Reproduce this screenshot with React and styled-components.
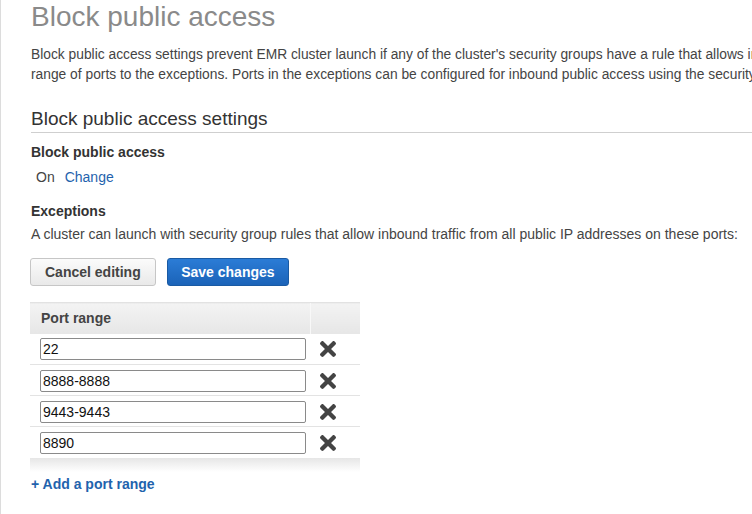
import React from "react";
import styled, { createGlobalStyle } from "styled-components";

const Global = createGlobalStyle`
  html, body { margin: 0; padding: 0; background: #fff; overflow: hidden; }
  body { font-family: Arial, "Liberation Sans", Helvetica, sans-serif; color: #444; }
`;

const Page = styled.div`
  border-left: 1px solid #dcdcdc;
  min-height: 514px;
  width: 1200px;
  padding-left: 30px;
  box-sizing: border-box;
`;

const Title = styled.h1`
  margin: 0;
  font-size: 28px;
  line-height: 34px;
  font-weight: normal;
  color: #8a8a8a;
`;

const Intro = styled.p`
  margin: 11px 0 0;
  font-size: 13.8px;
  line-height: 20px;
  color: #444;
  white-space: nowrap;
`;

const SectionHeading = styled.h2`
  margin: 22px 0 0;
  font-size: 19px;
  line-height: 24px;
  font-weight: normal;
  color: #333;
  padding-bottom: 1px;
  border-bottom: 1px solid #cfcfcf;
`;

const Label = styled.div`
  margin-top: ${(p) => p.$mt}px;
  font-size: 14px;
  line-height: 20px;
  font-weight: bold;
  color: #333;
`;

const StatusRow = styled.div`
  margin-top: 5px;
  padding-left: 5px;
  display: flex;
  gap: 10px;
  font-size: 14px;
  line-height: 20px;
  color: #444;
`;

const Link = styled.a`
  color: #1f63ad;
  text-decoration: none;
  cursor: pointer;
  font-weight: ${(p) => (p.$bold ? "bold" : "normal")};
  font-size: 14px;
`;

const Text = styled.div`
  margin-top: 3px;
  font-size: 14px;
  line-height: 20px;
  color: #444;
`;

const Buttons = styled.div`
  display: flex;
  gap: 11px;
  margin: 14px 0 0 -1px;
`;

const Button = styled.button`
  height: 28px;
  box-sizing: border-box;
  padding: 0 ${(p) => (p.$primary ? 13.5 : 14)}px;
  font-family: inherit;
  font-size: 14px;
  font-weight: bold;
  border-radius: 3px;
  cursor: pointer;
  color: ${(p) => (p.$primary ? "#fff" : "#444")};
  border: 1px solid ${(p) => (p.$primary ? "#1a5aa3" : "#c6c6c6")};
  background: ${(p) =>
    p.$primary
      ? "linear-gradient(#2b7cd6, #1b63b8)"
      : "linear-gradient(#fbfbfb, #e9e9e9)"};
`;

const Table = styled.table`
  margin: 16px 0 0 -1px;
  width: 330px;
  border-collapse: collapse;
  font-size: 14px;
`;

const HeadCell = styled.th`
  height: 31px;
  padding: 0 0 0 11px;
  text-align: left;
  font-size: 14px;
  font-weight: bold;
  color: #444;
  background: linear-gradient(#f3f3f3, #e6e6e6);
  border-top: 1px solid #e2e2e2;
  border-left: ${(p) => (p.$divider ? "1px solid #f8f8f8" : "none")};
  width: ${(p) => (p.$narrow ? "50px" : "auto")};
  box-sizing: border-box;
`;

const Row = styled.tr`
  height: 31px;
  border-bottom: ${(p) => (p.$last ? "none" : "1px solid #e3e3e3")};
`;

const InputCell = styled.td`
  padding: 0 4px 0 10px;
  vertical-align: middle;
`;

const IconCell = styled.td`
  padding: 0 0 0 10px;
  vertical-align: middle;
`;

const PortInput = styled.input`
  display: block;
  width: 100%;
  box-sizing: border-box;
  height: 22px;
  margin-top: 1px;
  padding: 0 2px;
  font-family: inherit;
  font-size: 14px;
  color: #111;
  border: 1px solid #8a8a8a;
  border-radius: 2px;
  outline: none;
`;

const RemoveButton = styled.span`
  display: flex;
  width: 16px;
  height: 16px;
  margin-top: 1px;
  color: #444;
  cursor: pointer;
`;

const FootBand = styled.td`
  height: 14px;
  padding: 0;
  background: linear-gradient(#e6e6e6, #ffffff);
`;

const AddRow = styled.div`
  margin-top: 2px;
  line-height: 20px;
`;

const XIcon = () => (
  <svg viewBox="0 80 352 352" width="16" height="16" fill="currentColor">
    <path d="M242.72 256l100.07-100.07c12.28-12.28 12.28-32.19 0-44.48l-22.24-22.24c-12.28-12.28-32.19-12.28-44.48 0L176 189.28 75.93 89.21c-12.28-12.28-32.19-12.28-44.48 0L9.21 111.45c-12.28 12.28-12.28 32.19 0 44.48L109.28 256 9.21 356.07c-12.28 12.28-12.28 32.19 0 44.48l22.24 22.24c12.28 12.28 32.2 12.28 44.48 0L176 322.72l100.07 100.07c12.28 12.28 32.2 12.28 44.48 0l22.24-22.24c12.28-12.28 12.28-32.19 0-44.48L242.72 256z" />
  </svg>
);

const ports = ["22", "8888-8888", "9443-9443", "8890"];

export default function App() {
  return (
    <>
      <Global />
      <Page>
        <Title>Block public access</Title>
        <Intro>
          Block public access settings prevent EMR cluster launch if any of the cluster's security groups have a rule that allows inbound traffic from IPv4 0.0.0.0/0 or IPv6 ::/0 (public access), unless a port has been specified as an exception. You can add a port or a
          <br />
          range of ports to the exceptions. Ports in the exceptions can be configured for inbound public access using the security groups.
        </Intro>
        <SectionHeading>Block public access settings</SectionHeading>
        <Label $mt={9}>Block public access</Label>
        <StatusRow>
          <span>On</span>
          <Link>Change</Link>
        </StatusRow>
        <Label $mt={14}>Exceptions</Label>
        <Text>
          A cluster can launch with security group rules that allow inbound traffic from all public IP addresses on these ports:
        </Text>
        <Buttons>
          <Button>Cancel editing</Button>
          <Button $primary>Save changes</Button>
        </Buttons>
        <Table>
          <thead>
            <tr>
              <HeadCell>Port range</HeadCell>
              <HeadCell $divider $narrow />
            </tr>
          </thead>
          <tbody>
            {ports.map((p, i) => (
              <Row key={p} $last={i === ports.length - 1}>
                <InputCell>
                  <PortInput defaultValue={p} />
                </InputCell>
                <IconCell>
                  <RemoveButton>
                    <XIcon />
                  </RemoveButton>
                </IconCell>
              </Row>
            ))}
            <tr>
              <FootBand colSpan={2} />
            </tr>
          </tbody>
        </Table>
        <AddRow>
          <Link $bold>+ Add a port range</Link>
        </AddRow>
      </Page>
    </>
  );
}
